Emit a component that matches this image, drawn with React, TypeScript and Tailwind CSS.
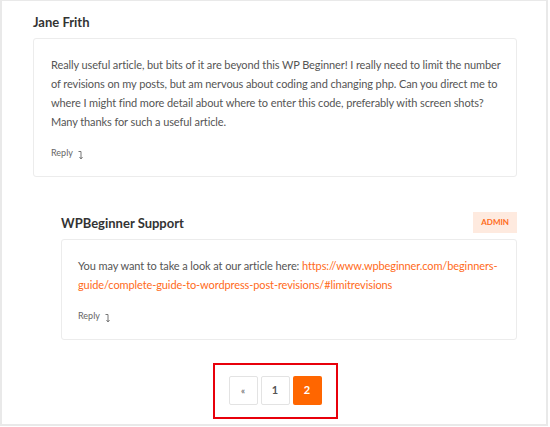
import React from 'react';

const ReplyIcon = () => (
  <svg width="6" height="10" viewBox="0 0 6 10" className="ml-[5px] mt-[4px]" fill="none" stroke="#777" strokeWidth="1">
    <path d="M0.5 1.5 H3 V8.5" />
    <path d="M1.5 7 L3 9 L4.5 7" />
  </svg>
);

const Reply = () => (
  <div className="flex items-start text-[9px] text-[#666] mt-[15px]">
    <span>Reply</span>
    <ReplyIcon />
  </div>
);

const Lines = ({ lines }: { lines: React.ReactNode[] }) => (
  <p className="text-[11px] leading-[19px] tracking-[-0.1px] whitespace-nowrap">
    {lines.map((l, i) => (
      <span key={i} className="block">
        {l}
      </span>
    ))}
  </p>
);

export default function App() {
  return (
    <div
      className="w-[548px] h-[426px] border-2 border-t border-[#e9e9e9] bg-white text-[#555]"
      style={{ fontFamily: 'Lato, "Open Sans", sans-serif' }}
    >
      <div className="pl-[31px] pr-[29px] pt-[11px]">
        <h3 className="text-[13px] font-bold text-[#333] leading-[20px]">Jane Frith</h3>
        <div className="mt-[6px] border border-[#ececec] rounded-[3px] pl-[17px] pr-[16px] pt-[16px] pb-[16px]">
          <Lines
            lines={[
              'Really useful article, but bits of it are beyond this WP Beginner! I really need to limit the number',
              'of revisions on my posts, but am nervous about coding and changing php. Can you direct me to',
              'where I might find more detail about where to enter this code, preferably with screen shots?',
              'Many thanks for such a useful article.',
            ]}
          />
          <Reply />
        </div>

        <div className="ml-[28px] mt-[35px]">
          <div className="flex items-center justify-between">
            <h3 className="text-[13px] font-bold text-[#333] leading-[20px]">WPBeginner Support</h3>
            <span className="bg-[#feeadf] text-[#ff6a1a] text-[8px] font-bold px-[8px] leading-[21px]">ADMIN</span>
          </div>
          <div className="mt-[6px] border border-[#ececec] rounded-[3px] pl-[16px] pr-[16px] pt-[16px] pb-[16px]">
            <Lines
              lines={[
                <>
                  You may want to take a look at our article here:{' '}
                  <a className="text-[#ff6a1a]">https://www.wpbeginner.com/beginners-</a>
                </>,
                <a className="text-[#ff6a1a]">guide/complete-guide-to-wordpress-post-revisions/#limitrevisions</a>,
              ]}
            />
            <Reply />
          </div>
        </div>

        <div className="flex justify-center mt-[23px]">
          <div className="border-2 border-[#e8000b] px-[14px] pt-[11px] pb-[12px] flex gap-[3px]">
            <span className="w-[29px] h-[29px] flex items-center justify-center border border-[#e3e3e3] rounded-[2px] text-[9px] text-[#777] font-bold">
              «
            </span>
            <span className="w-[29px] h-[29px] flex items-center justify-center border border-[#e3e3e3] rounded-[2px] text-[11px] text-[#555] font-bold">
              1
            </span>
            <span className="w-[29px] h-[29px] flex items-center justify-center rounded-[2px] bg-[#ff6600] text-[11px] text-white font-bold">
              2
            </span>
          </div>
        </div>
      </div>
    </div>
  );
}
